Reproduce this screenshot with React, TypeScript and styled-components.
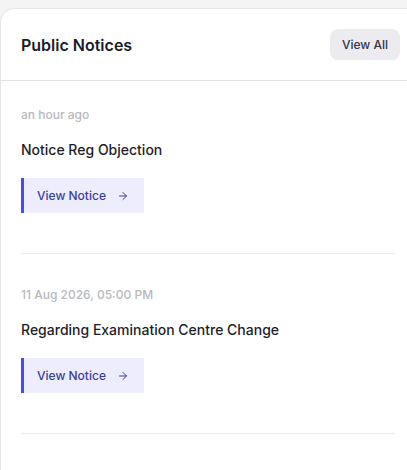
import styled, { createGlobalStyle } from "styled-components";
import { ArrowRight } from "lucide-react";

const GlobalStyle = createGlobalStyle`
  html, body {
    margin: 0;
    padding: 0;
    background: #f4f4f5;
    overflow: hidden;
  }
  body {
    font-family: Inter, "Noto Sans", sans-serif;
    -webkit-font-smoothing: antialiased;
  }
`;

const Card = styled.section`
  margin: 8px 0 0 0;
  width: 418px;
  min-height: 480px;
  background: #fff;
  border: 1px solid #e7e7ea;
  border-right: none;
  border-radius: 14px 0 0 0;
  box-sizing: border-box;
`;

const Header = styled.header`
  display: flex;
  align-items: center;
  justify-content: space-between;
  height: 72px;
  padding: 0 18px 0 20px;
  border-bottom: 1px solid #e4e4e7;
  box-sizing: border-box;
`;

const Title = styled.h2`
  margin: 0;
  font-size: 16px;
  font-weight: 600;
  color: #1c1c28;
`;

const ViewAll = styled.button`
  height: 31px;
  padding: 0 12px;
  border: 0;
  border-radius: 8px;
  background: #ebebf0;
  color: #34344a;
  font-family: inherit;
  font-size: 12px;
  font-weight: 500;
  cursor: pointer;
`;

const List = styled.div`
  padding: 0 23px 0 20px;
`;

const Item = styled.article`
  display: flex;
  flex-direction: column;
  align-items: flex-start;
  padding: 33px 0 40px;
  border-bottom: 1px solid #ececef;

  &:first-child {
    padding-top: 26px;
  }
`;

const Date = styled.div`
  font-size: 12px;
  line-height: 16px;
  font-weight: 500;
  color: #b8b8be;
`;

const NoticeTitle = styled.h3`
  margin: 17px 0 0;
  font-size: 14px;
  line-height: 20px;
  font-weight: 500;
  color: #1e1e2a;
`;

const NoticeButton = styled.button`
  display: flex;
  align-items: center;
  gap: 11px;
  margin-top: 18px;
  width: 123px;
  height: 35px;
  padding: 0 0 0 13px;
  border: 0;
  border-left: 3px solid #4b4fd6;
  background: #ededfd;
  color: #3a3d9c;
  font-family: inherit;
  font-size: 12px;
  font-weight: 500;
  cursor: pointer;
  box-sizing: border-box;
`;

const notices = [
  { date: "an hour ago", title: "Notice Reg Objection" },
  { date: "11 Aug 2026, 05:00 PM", title: "Regarding Examination Centre Change" },
];

export default function App() {
  return (
    <>
      <GlobalStyle />
      <Card>
        <Header>
          <Title>Public Notices</Title>
          <ViewAll>View All</ViewAll>
        </Header>
        <List>
          {notices.map((n) => (
            <Item key={n.title}>
              <Date>{n.date}</Date>
              <NoticeTitle>{n.title}</NoticeTitle>
              <NoticeButton>
                View Notice
                <ArrowRight size={12} strokeWidth={2} />
              </NoticeButton>
            </Item>
          ))}
        </List>
      </Card>
    </>
  );
}
